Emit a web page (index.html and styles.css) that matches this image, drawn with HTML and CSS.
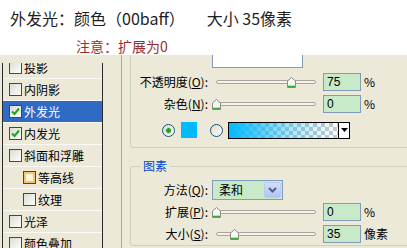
FILE: index.html
```html
<!DOCTYPE html>
<html lang="zh">
<head>
<meta charset="utf-8">
<title>外发光</title>
<link rel="stylesheet" href="styles.css">
</head>
<body>
<div class="header">
  <div class="title">外发光：颜色（00baff）<span class="size">大小 35像素</span></div>
  <div class="note">注意：扩展为0</div>
</div>
<div class="dialog">
  <div class="listbox">
    <ul class="list">
      <li class="row"><span class="cb"></span>投影</li>
      <li class="row"><span class="cb"></span>内阴影</li>
      <li class="row sel"><span class="cb"><svg class="chk" width="9" height="9" viewBox="0 0 9 9"><path d="M1 4.5 L3.5 7 L8 1.5" fill="none" stroke="#21a121" stroke-width="2"/></svg></span>外发光</li>
      <li class="row"><span class="cb"><svg class="chk" width="9" height="9" viewBox="0 0 9 9"><path d="M1 4.5 L3.5 7 L8 1.5" fill="none" stroke="#21a121" stroke-width="2"/></svg></span>内发光</li>
      <li class="row"><span class="cb"></span>斜面和浮雕</li>
      <li class="row sub"><span class="cb hot"></span>等高线</li>
      <li class="row sub"><span class="cb"></span>纹理</li>
      <li class="row"><span class="cb"></span>光泽</li>
      <li class="row"><span class="cb"></span>颜色叠加</li>
    </ul>
  </div>
  <div class="pane">
    <div class="group g1">
      <div class="blend"></div>
      <div class="field">
        <span class="lbl">不透明度(<u>O</u>):</span>
        <span class="slider"><span class="track"></span><svg class="thumb" style="left:75%" width="9" height="11" viewBox="0 0 9 11"><path d="M0.5 4 L4.5 0.5 L8.5 4 V10.5 H0.5 Z" fill="#f7f7f4" stroke="#8c8c84"/><path d="M1 9.5 H8" stroke="#2fb02f" stroke-width="1.6"/></svg></span>
        <span class="num">75</span><span class="unit">%</span>
      </div>
      <div class="field">
        <span class="lbl">杂色(<u>N</u>):</span>
        <span class="slider"><span class="track"></span><svg class="thumb" style="left:0%" width="9" height="11" viewBox="0 0 9 11"><path d="M0.5 4 L4.5 0.5 L8.5 4 V10.5 H0.5 Z" fill="#f7f7f4" stroke="#8c8c84"/><path d="M1 9.5 H8" stroke="#2fb02f" stroke-width="1.6"/></svg></span>
        <span class="num">0</span><span class="unit">%</span>
      </div>
      <div class="colorrow">
        <span class="radio on"></span>
        <span class="swatch"></span>
        <span class="radio r2"></span>
        <span class="grad"><span class="gfill"></span><span class="garrow"><svg width="7" height="4" viewBox="0 0 7 4"><path d="M0 0 H7 L3.5 4 Z" fill="#000"/></svg></span></span>
      </div>
    </div>
    <fieldset class="g2">
      <legend>图素</legend>
      <div class="field">
        <span class="lbl">方法(<u>Q</u>):</span>
        <span class="combo"><span class="cval">柔和</span><span class="cbtn"><svg width="9" height="6" viewBox="0 0 9 6"><path d="M1 1 L4.5 4.5 L8 1" fill="none" stroke="#4d6185" stroke-width="2"/></svg></span></span>
      </div>
      <div class="field">
        <span class="lbl">扩展(<u>P</u>):</span>
        <span class="slider"><span class="track"></span><svg class="thumb" style="left:0%" width="9" height="11" viewBox="0 0 9 11"><path d="M0.5 4 L4.5 0.5 L8.5 4 V10.5 H0.5 Z" fill="#f7f7f4" stroke="#8c8c84"/><path d="M1 9.5 H8" stroke="#2fb02f" stroke-width="1.6"/></svg></span>
        <span class="num">0</span><span class="unit">%</span>
      </div>
      <div class="field">
        <span class="lbl">大小(<u>S</u>):</span>
        <span class="slider"><span class="track"></span><svg class="thumb" style="left:18%" width="9" height="11" viewBox="0 0 9 11"><path d="M0.5 4 L4.5 0.5 L8.5 4 V10.5 H0.5 Z" fill="#f7f7f4" stroke="#8c8c84"/><path d="M1 9.5 H8" stroke="#2fb02f" stroke-width="1.6"/></svg></span>
        <span class="num">35</span><span class="unit">像素</span>
      </div>
    </fieldset>
  </div>
</div>
</body>
</html>
```

FILE: styles.css
```css
* { box-sizing: border-box; }
html, body { margin: 0; padding: 0; }
body {
  width: 407px;
  height: 248px;
  overflow: hidden;
  background: #fff;
  font-family: "Noto Sans CJK SC", "Noto Sans", sans-serif;
  font-size: 12px;
  color: #000;
}
.header { height: 55px; padding-top: 9px; }
.title {
  padding-left: 10px;
  font-size: 16px;
  line-height: 18px;
  color: #1e1e1e;
  white-space: nowrap;
}
.title .size { margin-left: 22px; }
.note {
  padding-left: 76px;
  margin-top: 11px;
  font-size: 14px;
  line-height: 16px;
  color: #9b2d30;
}
.dialog {
  height: 193px;
  background: #ECE9D8;
  display: flex;
  overflow: hidden;
}
.listbox {
  margin: 8px 0 0 2px;
  width: 101px;
  flex: none;
  overflow: hidden;
  border-left: 1px solid #2b2b2b;
  border-right: 1px solid #2b2b2b;
}
.list {
  list-style: none;
  margin: -6px 0 0 0;
  padding: 0;
}
.row {
  height: 22px;
  border-bottom: 1px solid #fbfaf6;
  display: flex;
  align-items: center;
  gap: 2px;
  padding-left: 6px;
  line-height: 14px;
  white-space: nowrap;
}
.row.sub { padding-left: 20px; }
.row.sel { background: #316AC5; color: #fff; }
.cb {
  width: 13px;
  height: 13px;
  flex: none;
  border: 1px solid #1C5180;
  background: linear-gradient(135deg, #dcdcd5, #fdfdfb);
  display: flex;
  align-items: center;
  justify-content: center;
}
.cb.hot {
  background: #fff6dc;
  box-shadow: inset 0 0 0 2px #f6c46a;
}
.pane {
  flex: 1;
  margin-left: 18px;
  border-left: 1px solid #aca899;
  padding-left: 8px;
  min-width: 0;
}
.group {
  width: 300px;
  border: 1px solid #D0D0BF;
  border-radius: 3px;
}
.g1 { margin-top: -18px; padding: 10px 0 6px 0; }
.blend {
  margin-left: 81px;
  width: 91px;
  height: 20px;
  border: 1px solid #7F9DB9;
  background: #fff;
}
.field {
  display: flex;
  align-items: center;
  height: 22px;
}
.g1 .blend + .field { margin-top: 3px; }
.lbl {
  width: 77px;
  flex: none;
  text-align: right;
  line-height: 14px;
  white-space: nowrap;
}
.slider {
  position: relative;
  width: 100px;
  height: 11px;
  margin-left: 8px;
  flex: none;
  display: flex;
  align-items: center;
}
.track {
  display: block;
  width: 100%;
  height: 4px;
  border: 1px solid #a7a69c;
  border-radius: 2px;
  background: #f3f2ec;
}
.thumb {
  position: absolute;
  top: 0;
  margin-left: -4px;
}
.num {
  margin-left: 7px;
  width: 38px;
  height: 18px;
  flex: none;
  border: 1px solid #7F9DB9;
  background: #C9EAC9;
  padding-left: 3px;
  font-family: "Liberation Sans", sans-serif;
  font-size: 12px;
  line-height: 16px;
}
.unit { margin-left: 3px; line-height: 14px; }
.colorrow {
  display: flex;
  align-items: center;
  height: 22px;
  margin-top: 4px;
  padding-left: 31px;
}
.radio {
  width: 13px;
  height: 13px;
  flex: none;
  border-radius: 50%;
  border: 1px solid #1C5180;
  background: linear-gradient(135deg, #dcdcd5, #fdfdfb);
}
.radio.on {
  background: radial-gradient(circle, #21a121 0 2px, #9fd89f 2.5px, transparent 3.5px), linear-gradient(135deg, #dcdcd5, #fdfdfb);
}
.radio.r2 { margin-left: 13px; }
.swatch {
  width: 16px;
  height: 16px;
  margin-left: 6px;
  background: #00baff;
  flex: none;
}
.grad {
  margin-left: 5px;
  width: 122px;
  height: 17px;
  border: 1px solid #000;
  display: flex;
  flex: none;
}
.gfill {
  flex: 1;
  background:
    linear-gradient(to right, #00baff, rgba(0,186,255,0.35) 55%, rgba(0,186,255,0)),
    repeating-conic-gradient(#c8c8c8 0% 25%, #fff 0% 50%) 0 0 / 8px 8px;
}
.garrow {
  width: 11px;
  border-left: 1px solid #000;
  background: #fff;
  display: flex;
  align-items: center;
  justify-content: center;
}
.g2 {
  margin: 11px 0 0 0;
  padding: 6px 0 0 0;
  width: 300px;
  min-width: 0;
  border: 1px solid #D0D0BF;
  border-radius: 3px;
}
.g2 legend {
  margin-left: 9px;
  padding: 0 3px;
  color: #0046D5;
  font-size: 12px;
  line-height: 14px;
}
.combo {
  margin-left: 4px;
  width: 71px;
  height: 20px;
  flex: none;
  border: 1px solid #7F9DB9;
  background: #C9EAC9;
  display: flex;
  align-items: stretch;
}
.cval {
  flex: 1;
  padding-left: 6px;
  line-height: 18px;
}
.cbtn {
  width: 17px;
  margin: 1px;
  border: 1px solid #b9cbf4;
  border-radius: 2px;
  background: linear-gradient(#d2ddfa, #b0c4f4);
  display: flex;
  align-items: center;
  justify-content: center;
}
```
